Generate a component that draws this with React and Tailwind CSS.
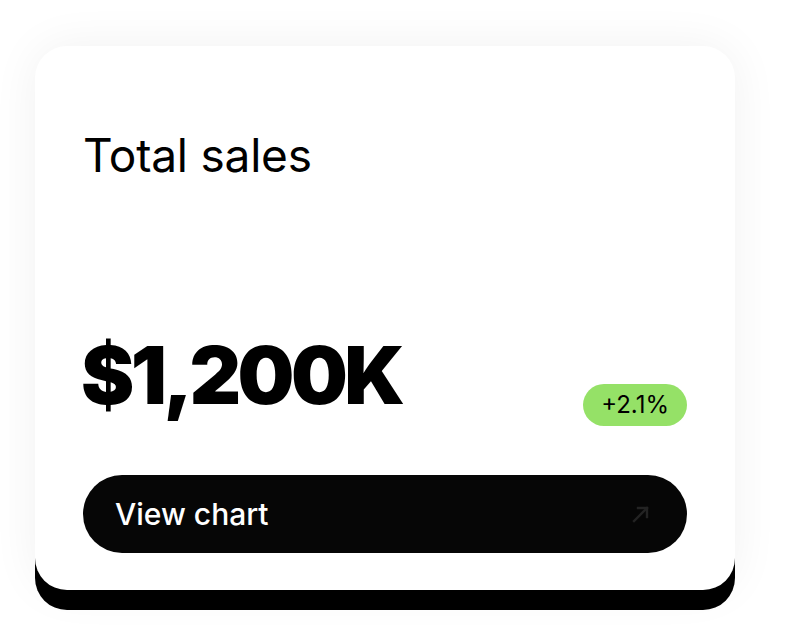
import React from 'react';

const ArrowUpRight = () => (
    <svg width="20" height="20" viewBox="0 0 20 20" fill="none" stroke="#232323" strokeWidth="2.4" strokeLinecap="square">
        <path d="M3 17 L16 4" />
        <path d="M7 4 H16 V13" />
    </svg>
);

const SalesCard = ({ label, value, change }) => (
    <div className="w-[700px] h-[544px] rounded-[32px] bg-white shadow-[0_20px_0_#000,0_0_48px_rgba(0,0,0,0.06)] px-12 pt-[86px] pb-[37px] flex flex-col">
        <h2 className="text-[46px] leading-none font-normal text-black tracking-[-0.005em]">{label}</h2>
        <div className="flex-1" />
        <div className="flex items-end justify-between">
            <p className="-ml-[2px] mb-[11px] text-[80px] leading-none font-black text-black tracking-[-0.045em]">{value}</p>
            <span className="h-[42px] px-[18px] rounded-full bg-[#95e167] text-black text-[24px] flex items-center">{change}</span>
        </div>
        <button className="mt-[49px] h-[78px] w-full rounded-full bg-[#060606] pl-8 pr-9 flex items-center justify-between text-white text-[30px] font-medium">
            <span>View chart</span>
            <ArrowUpRight />
        </button>
    </div>
);

export default function App() {
    return (
        <div className="min-h-screen bg-white pl-[35px] pt-[46px] font-['Inter','Liberation_Sans',sans-serif]">
            <SalesCard label="Total sales" value="$1,200K" change="+2.1%" />
        </div>
    );
}
